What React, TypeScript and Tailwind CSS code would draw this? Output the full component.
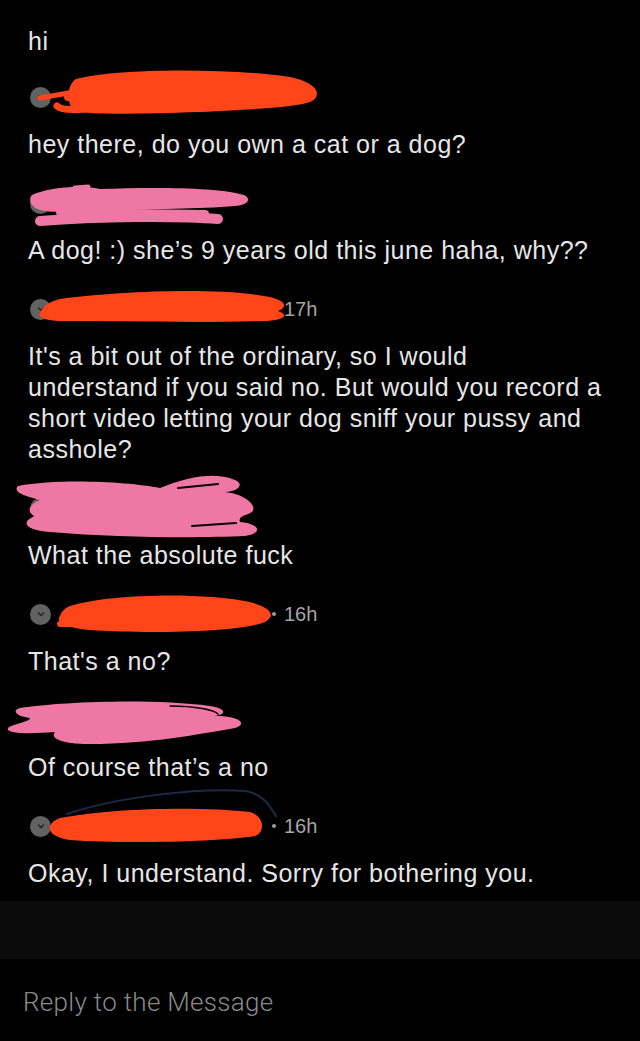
import { ReactNode } from 'react'

const ORANGE = '#ff4519'
const PINK = '#ee77a4'

type Scribble = { color: string; shape: ReactNode }

const scribbles: Record<string, Scribble> = {
  s1: {
    color: ORANGE,
    shape: (
      <>
        <path d="M 76 -18 C 110 -28, 220 -30, 290 -20 C 318 -14, 322 -2, 312 4 C 300 10, 260 12, 200 15 C 140 17, 90 18, 76 14 C 66 10, 66 -12, 76 -18 Z" />
        <path d="M 40 1 L 80 -6" strokeWidth={5} />
        <path d="M 57 9 Q 62 14, 85 12" strokeWidth={7} />
        <path d="M 68 0 L 90 -2" strokeWidth={8} />
      </>
    ),
  },
  s2: {
    color: PINK,
    shape: (
      <>
        <path d="M 32 -8 C 50 -16, 80 -18, 100 -14 C 150 -16, 220 -16, 244 -8 C 252 -4, 248 2, 235 3 C 200 6, 150 6, 110 7 C 90 8, 60 10, 45 8 C 30 6, 28 -4, 32 -8 Z" />
        <path d="M 40 18 C 100 13, 180 13, 218 16" strokeWidth={10} />
        <path d="M 60 9 L 205 11" strokeWidth={8} />
        <path d="M 75 -15 L 88 -16" strokeWidth={5} />
      </>
    ),
  },
  s3: {
    color: ORANGE,
    shape: (
      <path d="M 60 -10 C 120 -18, 220 -22, 270 -12 C 286 -8, 288 -2, 278 2 C 290 6, 284 12, 262 12 C 200 14, 120 12, 60 12 C 45 12, 38 8, 40 4 C 42 -2, 50 -8, 60 -10 Z" />
    ),
  },
  s4: {
    color: PINK,
    shape: (
      <>
        <path d="M 18 -22 C 60 -30, 130 -26, 160 -20 C 190 -32, 215 -36, 235 -28 C 245 -24, 238 -16, 225 -16 C 245 -14, 258 -2, 252 4 C 245 8, 238 8, 240 14 C 262 16, 262 26, 245 28 C 200 30, 120 30, 50 24 C 25 22, 20 14, 35 8 C 25 4, 30 -4, 40 -8 C 25 -12, 12 -16, 18 -22 Z" />
        <path d="M 178 -20 L 218 -24" stroke="#000" strokeWidth={2} />
        <path d="M 192 18 L 236 15" stroke="#000" strokeWidth={2} />
      </>
    ),
  },
  s5: {
    color: ORANGE,
    shape: (
      <>
        <path d="M 70 -8 C 110 -20, 200 -22, 250 -12 C 272 -6, 276 2, 265 8 C 240 18, 150 20, 90 16 C 65 14, 55 8, 60 2 C 62 -3, 65 -6, 70 -8 Z" />
        <path d="M 60 10 L 76 10" strokeWidth={6} />
      </>
    ),
  },
  s6: {
    color: PINK,
    shape: (
      <>
        <path d="M 20 -12 C 60 -18, 150 -22, 210 -14 C 225 -12, 228 -6, 215 -4 C 240 -4, 248 4, 235 8 C 200 14, 150 24, 90 24 C 60 24, 50 18, 55 12 C 30 14, 5 14, 8 8 C 12 4, 30 2, 30 -2 C 15 -4, 12 -10, 20 -12 Z" />
        <path d="M 170 -14 C 195 -14, 215 -10, 218 -6" stroke="#000" strokeWidth={1.5} fill="none" />
      </>
    ),
  },
  s7: {
    color: ORANGE,
    shape: (
      <>
        <path d="M 67 -12 C 120 -30, 200 -38, 245 -35 C 262 -33, 270 -20, 276 -10" stroke="#1c2947" strokeWidth={2} fill="none" />
        <path d="M 60 -8 C 110 -18, 200 -20, 250 -14 C 264 -10, 266 6, 255 10 C 220 16, 120 18, 70 14 C 55 12, 48 6, 50 0 C 52 -4, 55 -6, 60 -8 Z" />
      </>
    ),
  },
}

function Avatar() {
  return (
    <div className="ml-[2px] w-[21px] h-[21px] rounded-full bg-[#626262] flex items-center justify-center shrink-0">
      <svg width="10" height="10" viewBox="0 0 10 10" fill="none" stroke="#262626" strokeWidth="1.6" strokeLinecap="round" strokeLinejoin="round">
        <path d="M 2.5 4 L 5 6.5 L 7.5 4" />
      </svg>
    </div>
  )
}

function Header({ id, time, dot, first }: { id: string; time?: string; dot?: boolean; first?: boolean }) {
  const s = scribbles[id]
  return (
    <div className={`relative ${first ? 'mt-[28px]' : 'mt-[31px]'} h-6 flex items-center`}>
      <Avatar />
      {time && (
        <div className="ml-[221px] flex items-center text-[20px] text-[#a5a5a5] font-['Liberation_Sans',sans-serif]">
          <span className={`w-1 h-1 rounded-full ${dot ? 'bg-[#9a9a9a]' : 'bg-transparent'} mr-[8px]`} />
          <span>{time}</span>
        </div>
      )}
      <svg
        className="absolute left-[-28px] top-[-38px] pointer-events-none"
        width="640"
        height="100"
        viewBox="0 -50 640 100"
        fill={s.color}
        stroke={s.color}
        strokeLinecap="round"
        strokeLinejoin="round"
        strokeWidth={0}
      >
        {s.shape}
      </svg>
    </div>
  )
}

function Msg({ children }: { children: ReactNode }) {
  return <p className="mt-[20px] text-[25px] leading-[31px] tracking-[0.5px] text-[#e6e6e6]">{children}</p>
}

export default function App() {
  return (
    <div className="bg-black w-full min-h-[1041px] flex flex-col font-['Liberation_Sans',sans-serif]">
      <div className="px-7 pt-[26px] pb-[12px]">
        <p className="text-[25px] leading-[31px] tracking-[0.5px] text-[#e6e6e6]">hi</p>

        <Header id="s1" first />
        <Msg>hey there, do you own a cat or a dog?</Msg>

        <Header id="s2" />
        <Msg>A dog! :) she’s 9 years old this june haha, why??</Msg>

        <Header id="s3" time="17h" />
        <Msg>
          It's a bit out of the ordinary, so I would
          <br />
          understand if you said no. But would you record a
          <br />
          short video letting your dog sniff your pussy and
          <br />
          asshole?
        </Msg>

        <Header id="s4" />
        <Msg>What the absolute fuck</Msg>

        <Header id="s5" time="16h" dot />
        <Msg>That's a no?</Msg>

        <Header id="s6" />
        <Msg>Of course that’s a no</Msg>

        <Header id="s7" time="16h" dot />
        <Msg>Okay, I understand. Sorry for bothering you.</Msg>
      </div>

      <div className="h-[58px] bg-[#0b0b0b]" />

      <div className="flex-1 px-[23px] pt-[27px]">
        <p className="text-[26px] leading-[32px] font-light tracking-[0.3px] text-[#8a8a8a] font-['Roboto',sans-serif]">Reply to the Message</p>
      </div>
    </div>
  )
}
